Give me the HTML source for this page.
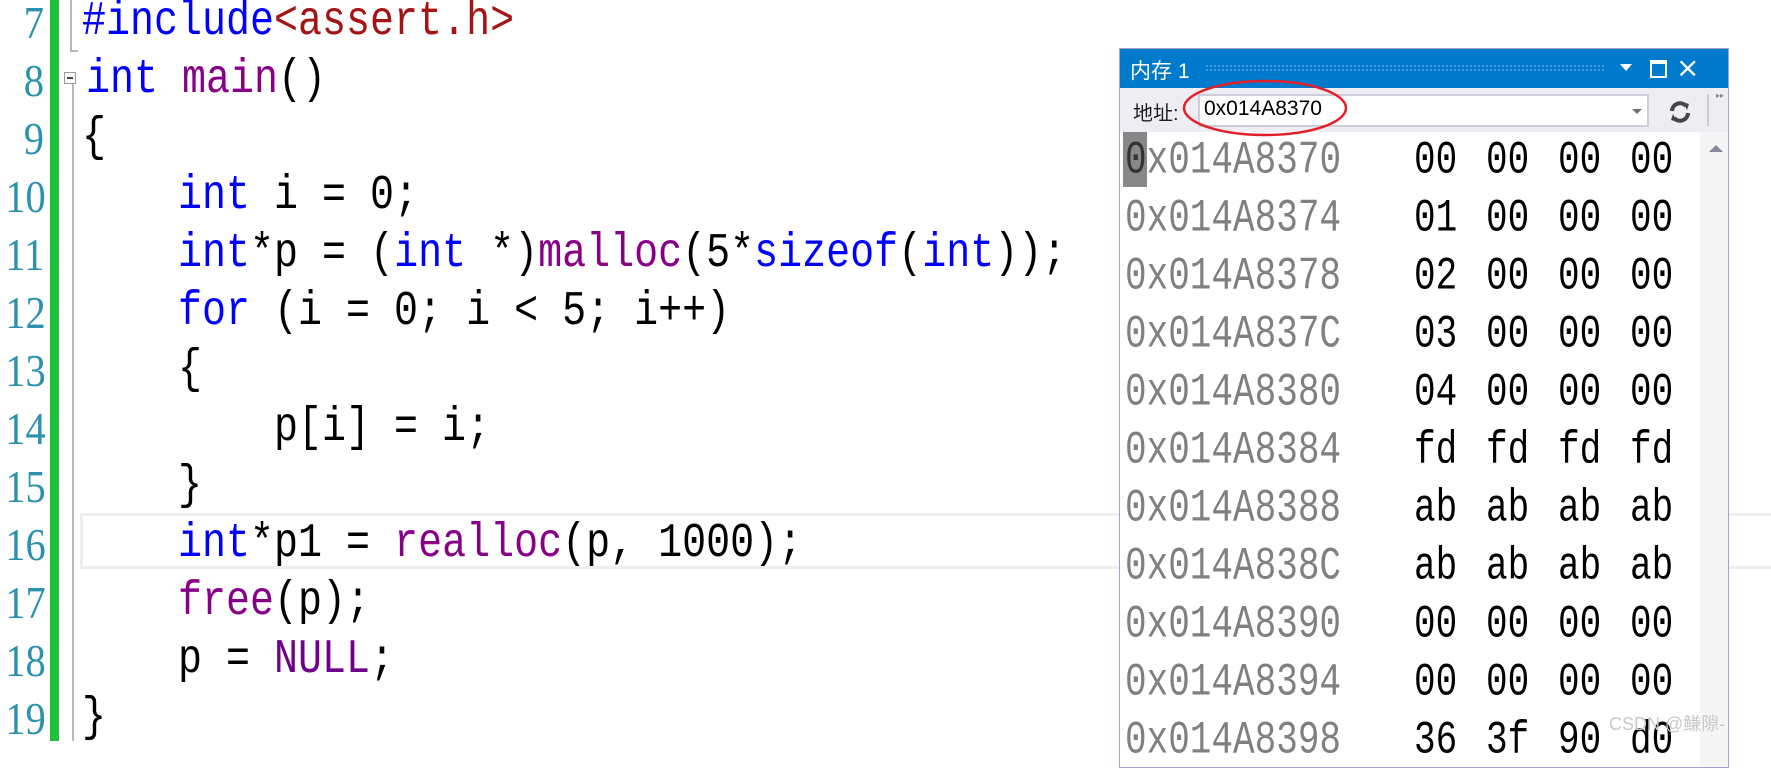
<!DOCTYPE html>
<html><head><meta charset="utf-8"><style>
body{margin:0;width:1771px;height:741px;overflow:hidden;background:#fff;position:relative;font-family:"Liberation Mono",monospace}
.ln{position:absolute;left:0;width:44px;text-align:right;font-family:"Liberation Serif",serif;font-size:46px;color:#2b91af;line-height:58px;transform:scaleX(0.88);transform-origin:right}
.c{position:absolute;left:82px;font-size:40px;line-height:58px;white-space:pre;transform:scaleY(1.2);transform-origin:left center;color:#000}
.k{color:#0000ff}.f{color:#880088}.s{color:#a31515}.m{color:#6f008a}
.a{position:absolute;left:1125px;font-size:36px;line-height:58px;white-space:pre;color:#808080;transform:scaleY(1.3);transform-origin:left center}
.h{position:absolute;font-size:36px;line-height:58px;white-space:pre;color:#000;transform:scaleY(1.3);transform-origin:left center}
</style></head><body>
<div style="position:absolute;left:50px;top:0;width:9px;height:741px;background:#1ec13d"></div>
<div style="position:absolute;left:72px;top:80px;width:2px;height:661px;background:#b8b8b8"></div>
<div style="position:absolute;left:70px;top:0;width:2px;height:52px;background:#b8b8b8"></div>
<div style="position:absolute;left:70px;top:50px;width:8px;height:2px;background:#b8b8b8"></div>
<div style="position:absolute;left:64px;top:72px;width:12px;height:12px;border:1px solid #999;background:#fff;box-sizing:border-box"><div style="position:absolute;left:2px;top:4px;width:6px;height:2px;background:#444"></div></div>
<div style="position:absolute;left:80px;top:513px;width:1700px;height:56px;border:3px solid #eeeeee;box-sizing:border-box"></div>

<div class="ln" style="top:-6px">7</div>
<div class="ln" style="top:52px">8</div>
<div class="ln" style="top:110px">9</div>
<div class="ln" style="top:168px">10</div>
<div class="ln" style="top:226px">11</div>
<div class="ln" style="top:284px">12</div>
<div class="ln" style="top:342px">13</div>
<div class="ln" style="top:400px">14</div>
<div class="ln" style="top:458px">15</div>
<div class="ln" style="top:516px">16</div>
<div class="ln" style="top:574px">17</div>
<div class="ln" style="top:632px">18</div>
<div class="ln" style="top:690px">19</div>

<div class="c" style="top:-6px"><span class="k">#include</span><span class="s">&lt;assert.h&gt;</span></div>
<div class="c" style="top:52px;left:86px"><span class="k">int</span> <span class="f">main</span>()</div>
<div class="c" style="top:110px">{</div>
<div class="c" style="top:168px">    <span class="k">int</span> i = 0;</div>
<div class="c" style="top:226px">    <span class="k">int</span>*p = (<span class="k">int</span> *)<span class="f">malloc</span>(5*<span class="k">sizeof</span>(<span class="k">int</span>));</div>
<div class="c" style="top:284px">    <span class="k">for</span> (i = 0; i &lt; 5; i++)</div>
<div class="c" style="top:342px">    {</div>
<div class="c" style="top:400px">        p[i] = i;</div>
<div class="c" style="top:458px">    }</div>
<div class="c" style="top:516px">    <span class="k">int</span>*p1 = <span class="f">realloc</span>(p, 1000);</div>
<div class="c" style="top:574px">    <span class="f">free</span>(p);</div>
<div class="c" style="top:632px">    p = <span class="m">NULL</span>;</div>
<div class="c" style="top:690px">}</div>

<div style="position:absolute;left:1119px;top:48px;width:610px;height:720px;background:#fff;border:1px solid #a0a4c8;box-sizing:border-box;overflow:hidden">
 <div style="position:absolute;left:0;top:0;width:100%;height:39px;background:#007acc"></div>
 <div style="position:absolute;left:10px;top:6px;color:#fff;font-family:'Liberation Sans','Noto Sans CJK SC',sans-serif;font-size:21px">内存 1</div>
 <div style="position:absolute;left:85px;top:15px;width:400px;height:8px;background-image:radial-gradient(#4a9ad8 1px,transparent 1.2px);background-size:4px 4px"></div>
 <div style="position:absolute;left:500px;top:15px;width:0;height:0;border-left:6px solid transparent;border-right:6px solid transparent;border-top:7px solid #fff"></div>
 <div style="position:absolute;left:530px;top:11px;width:13px;height:12px;border:2px solid #fff;border-top-width:4px"></div>
 <div style="position:absolute;left:556px;top:2px;color:#fff;font-family:'DejaVu Sans',sans-serif;font-size:28px;line-height:34px">×</div>
 <div style="position:absolute;left:0;top:39px;width:100%;height:44px;background:#eeeef2"></div>
 <div style="position:absolute;left:13px;top:48px;font-family:'Liberation Sans','Noto Sans CJK SC',sans-serif;font-size:20px;color:#1e1e1e">地址:</div>
 <div style="position:absolute;left:78px;top:45px;width:451px;height:33px;background:#fff;border:2px solid #cccedb;box-sizing:border-box"></div>
 <div style="position:absolute;left:84px;top:48px;font-family:'Liberation Sans',sans-serif;font-size:21px;color:#000">0x014A8370</div>
 <div style="position:absolute;left:512px;top:60px;border-left:5px solid transparent;border-right:5px solid transparent;border-top:5px solid #717171"></div>
 <svg style="position:absolute;left:547px;top:50px" width="26" height="26" viewBox="0 0 26 26"><path d="M5 12a8 8 0 0 1 14-5" fill="none" stroke="#444" stroke-width="4"/><path d="M16 3l6 2-2 6z" fill="#444"/><path d="M21 14a8 8 0 0 1-14 5" fill="none" stroke="#444" stroke-width="4"/><path d="M10 23l-6-2 2-6z" fill="#444"/></svg>
 <div style="position:absolute;left:587px;top:45px;width:2px;height:32px;background:#ccc"></div>
 <div style="position:absolute;left:596px;top:42px;font-size:8px;color:#888">▸▸</div>
 <div style="position:absolute;left:580px;top:83px;width:30px;height:640px;background:#f5f5f5"></div>
 <div style="position:absolute;left:589px;top:96px;border-left:7px solid transparent;border-right:7px solid transparent;border-bottom:7px solid #868999"></div>
</div>
<div style="position:absolute;left:1123px;top:132px;width:24px;height:55px;background:#888"></div>
<svg style="position:absolute;left:0;top:0" width="1771" height="741"><ellipse cx="1265" cy="108" rx="81" ry="27" fill="none" stroke="#e0202a" stroke-width="2.5"/></svg>

<div class="a" style="top:132px"><span style="color:#333">0</span>x014A8370</div>
<div class="a" style="top:190px">0x014A8374</div>
<div class="a" style="top:248px">0x014A8378</div>
<div class="a" style="top:306px">0x014A837C</div>
<div class="a" style="top:364px">0x014A8380</div>
<div class="a" style="top:422px">0x014A8384</div>
<div class="a" style="top:480px">0x014A8388</div>
<div class="a" style="top:538px">0x014A838C</div>
<div class="a" style="top:596px">0x014A8390</div>
<div class="a" style="top:654px">0x014A8394</div>
<div class="a" style="top:712px">0x014A8398</div>

<div class="h" style="top:132px;left:1414px">00</div><div class="h" style="top:132px;left:1486px">00</div><div class="h" style="top:132px;left:1558px">00</div><div class="h" style="top:132px;left:1630px">00</div>
<div class="h" style="top:190px;left:1414px">01</div><div class="h" style="top:190px;left:1486px">00</div><div class="h" style="top:190px;left:1558px">00</div><div class="h" style="top:190px;left:1630px">00</div>
<div class="h" style="top:248px;left:1414px">02</div><div class="h" style="top:248px;left:1486px">00</div><div class="h" style="top:248px;left:1558px">00</div><div class="h" style="top:248px;left:1630px">00</div>
<div class="h" style="top:306px;left:1414px">03</div><div class="h" style="top:306px;left:1486px">00</div><div class="h" style="top:306px;left:1558px">00</div><div class="h" style="top:306px;left:1630px">00</div>
<div class="h" style="top:364px;left:1414px">04</div><div class="h" style="top:364px;left:1486px">00</div><div class="h" style="top:364px;left:1558px">00</div><div class="h" style="top:364px;left:1630px">00</div>
<div class="h" style="top:422px;left:1414px">fd</div><div class="h" style="top:422px;left:1486px">fd</div><div class="h" style="top:422px;left:1558px">fd</div><div class="h" style="top:422px;left:1630px">fd</div>
<div class="h" style="top:480px;left:1414px">ab</div><div class="h" style="top:480px;left:1486px">ab</div><div class="h" style="top:480px;left:1558px">ab</div><div class="h" style="top:480px;left:1630px">ab</div>
<div class="h" style="top:538px;left:1414px">ab</div><div class="h" style="top:538px;left:1486px">ab</div><div class="h" style="top:538px;left:1558px">ab</div><div class="h" style="top:538px;left:1630px">ab</div>
<div class="h" style="top:596px;left:1414px">00</div><div class="h" style="top:596px;left:1486px">00</div><div class="h" style="top:596px;left:1558px">00</div><div class="h" style="top:596px;left:1630px">00</div>
<div class="h" style="top:654px;left:1414px">00</div><div class="h" style="top:654px;left:1486px">00</div><div class="h" style="top:654px;left:1558px">00</div><div class="h" style="top:654px;left:1630px">00</div>
<div class="h" style="top:712px;left:1414px">36</div><div class="h" style="top:712px;left:1486px">3f</div><div class="h" style="top:712px;left:1558px">90</div><div class="h" style="top:712px;left:1630px">d0</div>

<div style="position:absolute;left:1609px;top:710px;font-family:'Liberation Sans','Noto Sans CJK SC',sans-serif;font-size:18px;color:#c8c8c8">CSDN @鳒隙-</div>
</body></html>
